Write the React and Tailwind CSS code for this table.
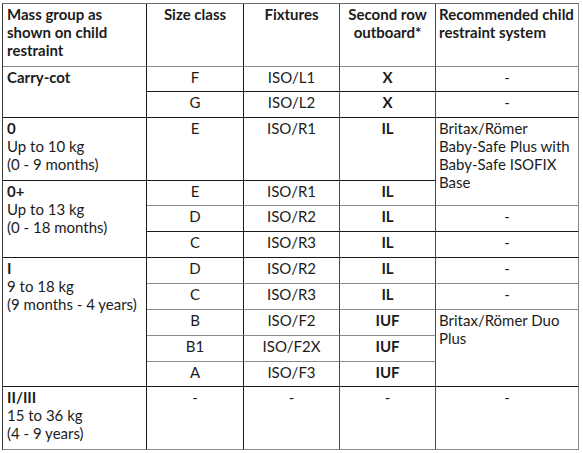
import React from "react";

const DARK = "border-[#1a1a1a]";
const GREY = "border-[#8a8a8a]";

// body rows of the three middle columns
const ROWS = [
  { size: "F", fix: "ISO/L1", out: "X", h: "h-[25px]", line: DARK },
  { size: "G", fix: "ISO/L2", out: "X", h: "h-[26px]", line: DARK },
  { size: "E", fix: "ISO/R1", out: "IL", h: "h-[63px]", line: DARK },
  { size: "E", fix: "ISO/R1", out: "IL", h: "h-[25px]", line: GREY },
  { size: "D", fix: "ISO/R2", out: "IL", h: "h-[26px]", line: DARK },
  { size: "C", fix: "ISO/R3", out: "IL", h: "h-[26px]", line: DARK },
  { size: "D", fix: "ISO/R2", out: "IL", h: "h-[26px]", line: GREY },
  { size: "C", fix: "ISO/R3", out: "IL", h: "h-[26px]", line: GREY },
  { size: "B", fix: "ISO/F2", out: "IUF", h: "h-[26px]", line: GREY },
  { size: "B1", fix: "ISO/F2X", out: "IUF", h: "h-[26px]", line: GREY },
  { size: "A", fix: "ISO/F3", out: "IUF", h: "h-[25px]", line: DARK },
  { size: "-", fix: "-", out: "-", h: "h-[63px]", line: GREY, plain: true },
];

// first column groups: index of the row they start at
const GROUPS = {
  0: { span: 2, title: "Carry-cot", sub: [], line: DARK },
  2: { span: 1, title: "0", sub: ["Up to 10 kg", "(0 - 9 months)"], line: DARK },
  3: { span: 3, title: "0+", sub: ["Up to 13 kg", "(0 - 18 months)"], line: DARK },
  6: { span: 5, title: "I", sub: ["9 to 18 kg", "(9 months - 4 years)"], line: DARK },
  11: { span: 1, title: "II/III", sub: ["15 to 36 kg", "(4 - 9 years)"], line: GREY },
};

// last column: text cells, some of them merged
const RECS = {
  0: { span: 1, text: ["-"], line: DARK },
  1: { span: 1, text: ["-"], line: DARK },
  2: {
    span: 2,
    text: ["Britax/Römer", "Baby-Safe Plus with", "Baby-Safe ISOFIX", "Base"],
    line: GREY,
  },
  4: { span: 1, text: ["-"], line: DARK },
  5: { span: 1, text: ["-"], line: DARK },
  6: { span: 1, text: ["-"], line: GREY },
  7: { span: 1, text: ["-"], line: GREY },
  8: { span: 3, text: ["Britax/Römer Duo", "Plus"], line: DARK },
  11: { span: 1, text: ["-"], line: GREY },
};

export default function App() {
  return (
    <div
      className="w-[583px] h-[453px] bg-white pl-[2px] pt-[3px] text-[15px] leading-[18px] text-[#1c1c1c]"
      style={{ fontFamily: "Lato, 'Open Sans', sans-serif" }}
    >
      <table className="w-[577px] table-fixed border-separate border-spacing-0 border-t border-l border-t-[#6e6e6e] border-l-[#3a3a3a]">
        <thead>
          <tr className="h-[63px] font-bold">
            <th className={`w-[144px] align-top text-left font-bold px-[4px] pt-[1px] border-r border-b border-r-[#1a1a1a] ${GREY}`}>
              Mass group as
              <br />
              shown on child
              <br />
              restraint
            </th>
            <th className={`w-[97px] align-top text-center font-bold pt-[1px] border-r border-b border-r-[#1a1a1a] ${GREY}`}>
              Size class
            </th>
            <th className={`w-[96px] align-top text-center font-bold pt-[1px] border-r border-b border-r-[#4a4a4a] ${GREY}`}>
              Fixtures
            </th>
            <th className={`w-[96px] align-top text-center font-bold pt-[1px] border-r border-b border-r-[#4a4a4a] ${GREY}`}>
              Second row
              <br />
              outboard*
            </th>
            <th className={`w-[143px] align-top text-left font-bold px-[3px] pt-[1px] border-r border-b border-r-[#8a8a8a] ${GREY} whitespace-nowrap`}>
              Recommended child
              <br />
              restraint system
            </th>
          </tr>
        </thead>
        <tbody>
          {ROWS.map((r, i) => {
            const g = GROUPS[i];
            const rec = RECS[i];
            return (
              <tr key={i} className={r.h}>
                {g && (
                  <td
                    rowSpan={g.span}
                    className={`align-top px-[4px] pt-[1px] border-r border-b border-r-[#1a1a1a] ${g.line}`}
                  >
                    <div className="font-bold">{g.title}</div>
                    {g.sub.map((s) => (
                      <div key={s}>{s}</div>
                    ))}
                  </td>
                )}
                <td className={`align-top text-center pt-[1px] border-r border-b border-r-[#1a1a1a] ${r.line}`}>
                  {r.size}
                </td>
                <td className={`align-top text-center pt-[1px] border-r border-b border-r-[#4a4a4a] ${r.line}`}>
                  {r.fix}
                </td>
                <td
                  className={`align-top text-center pt-[1px] border-r border-b border-r-[#4a4a4a] ${r.line} ${
                    r.plain ? "" : "font-bold"
                  }`}
                >
                  {r.out}
                </td>
                {rec && (
                  <td
                    rowSpan={rec.span}
                    className={`align-top pt-[1px] px-[3px] border-r border-b border-r-[#8a8a8a] ${rec.line} ${
                      rec.text[0] === "-" ? "text-center" : "text-left"
                    }`}
                  >
                    {rec.text.map((t) => (
                      <div key={t} className="whitespace-nowrap">
                        {t}
                      </div>
                    ))}
                  </td>
                )}
              </tr>
            );
          })}
        </tbody>
      </table>
    </div>
  );
}
